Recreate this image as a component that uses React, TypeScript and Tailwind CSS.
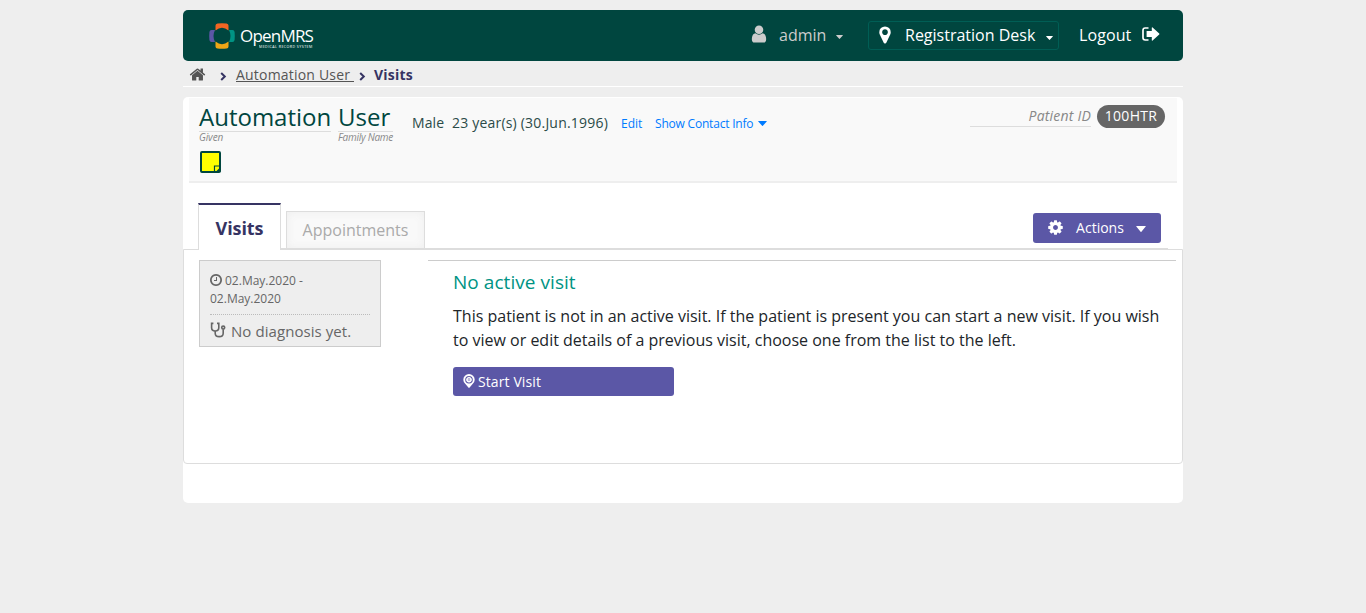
import React from "react";

type IconProps = { className?: string };

const HOME =
  "M1472 992v480q0 26-19 45t-45 19h-384v-384h-256v384h-384q-26 0-45-19t-19-45v-480q0-1 .5-3t.5-3l575-474 575 474q1 2 1 6zm223-69l-62 74q-8 9-21 11h-3q-13 0-21-7l-692-577-692 577q-12 8-24 7-13-2-21-11l-62-74q-8-10-7-23.5t11-21.5l719-599q32-26 76-26t76 26l244 204v-195q0-14 9-23t23-9h192q14 0 23 9t9 23v408l219 182q10 8 11 21.5t-7 23.5z";
const USER =
  "M1536 1399q0 109-62.5 187t-150.5 78h-854q-88 0-150.5-78t-62.5-187q0-85 8.5-160.5t31.5-152 58.5-131 94-89 134.5-34.5q131 128 313 128t313-128q76 0 134.5 34.5t94 89 58.5 131 31.5 152 8.5 160.5zm-256-887q0 159-112.5 271.5t-271.5 112.5-271.5-112.5-112.5-271.5 112.5-271.5 271.5-112.5 271.5 112.5 112.5 271.5z";
const MARKER =
  "M1152 640q0-106-75-181t-181-75-181 75-75 181 75 181 181 75 181-75 75-181zm256 0q0 109-33 179l-364 774q-16 33-47.5 52t-67.5 19-67.5-19-46.5-52l-365-774q-33-70-33-179 0-212 150-362t362-150 362 150 150 362z";
const COG =
  "M1152 896q0-106-75-181t-181-75-181 75-75 181 75 181 181 75 181-75 75-181zm512-109v222q0 12-8 23t-20 13l-185 28q-19 54-39 91 35 50 107 138 10 12 10 25t-9 23q-27 37-99 108t-94 71q-12 0-26-9l-138-108q-44 23-91 38-16 136-29 186-7 28-36 28h-222q-14 0-24.5-8.5t-11.5-21.5l-28-184q-49-16-90-37l-141 107q-10 9-25 9-14 0-25-11-126-114-165-168-7-10-7-23 0-12 8-23 15-21 51-66.5t54-70.5q-27-50-41-99l-183-27q-13-2-21-12.5t-8-23.5v-222q0-12 8-23t19-13l186-28q14-46 39-92-40-57-107-138-10-12-10-24 0-10 9-23 26-36 98.5-107.5t94.5-71.5q13 0 26 10l138 107q44-23 91-38 16-136 29-186 7-28 36-28h222q14 0 24.5 8.5t11.5 21.5l28 184q49 16 90 37l142-107q9-9 24-9 13 0 25 10 129 119 165 170 7 8 7 22 0 12-8 23-15 21-51 66.5t-54 70.5q26 50 41 98l183 28q13 2 21 12.5t8 23.5z";
const CLOCK =
  "M1024 544v448q0 14-9 23t-23 9h-320q-14 0-23-9t-9-23v-64q0-14 9-23t23-9h224v-352q0-14 9-23t23-9h64q14 0 23 9t9 23zm416 352q0-148-73-273t-198-198-273-73-273 73-198 198-73 273 73 273 198 198 273 73 273-73 198-198 73-273zm224 0q0 209-103 385.5t-279.5 279.5-385.5 103-385.5-103-279.5-279.5-103-385.5 103-385.5 279.5-279.5 385.5-103 385.5 103 279.5 279.5 103 385.5z";

function Glyph({ d, className = "" }: { d: string; className?: string }) {
  return (
    <svg viewBox="0 0 1792 1792" fill="currentColor" className={`shrink-0 ${className}`}>
      <path d={d} />
    </svg>
  );
}

function Chevron({ className = "" }: IconProps) {
  return (
    <svg viewBox="0 0 7 9" className={`h-[9px] w-[7px] shrink-0 ${className}`} fill="none" stroke="currentColor" strokeWidth="2">
      <path d="M1.2 1l3.6 3.5L1.2 8" />
    </svg>
  );
}

function Caret({ className = "" }: IconProps) {
  return (
    <svg viewBox="0 0 10 5" className={`shrink-0 ${className}`} fill="currentColor" preserveAspectRatio="none">
      <path d="M.6 0h8.8q.6 0 .3.5L5.4 4.7q-.4.4-.8 0L.3.5Q0 0 .6 0z" />
    </svg>
  );
}

function SignOut({ className = "" }: IconProps) {
  return (
    <svg viewBox="0 0 18 14" className={`h-[14px] w-[18px] shrink-0 ${className}`}>
      <path d="M6.5 1H3.2Q1 1 1 3.2v7.6Q1 13 3.2 13h3.3" fill="none" stroke="currentColor" strokeWidth="1.7" />
      <path d="M4.6 4.1h5.2V.9q0-.9.8-.3l6.6 5.8q.5.6 0 1.2l-6.6 5.8q-.8.6-.8-.3V9.900H4.6z" fill="currentColor" />
    </svg>
  );
}

function Stethoscope({ className = "" }: IconProps) {
  return (
    <svg viewBox="0 0 16 16" className={`h-4 w-4 shrink-0 ${className}`} fill="none" stroke="currentColor" strokeWidth="1.6">
      <path d="M3.4 1.4H1.6v4.4q0 3.2 3.6 3.2t3.6-3.2V1.4H7" />
      <path d="M5.2 9v2.2q0 3.400 4 3.400t4-3.400V7.400" />
      <circle cx="13.2" cy="5.6" r="1.500" />
    </svg>
  );
}

function VisitPin({ className = "" }: IconProps) {
  return (
    <svg viewBox="0 0 12 14" className={`h-[14px] w-3 shrink-0 ${className}`}>
      <path
        fill="currentColor"
        fillRule="evenodd"
        d="M6 0a5.7 5.7 0 0 1 5.7 5.7q0 2.2-1.9 4L6.6 13.6q-.6.6-1.2 0L2.2 9.7Q.3 7.9.3 5.7A5.7 5.7 0 0 1 6 0zM6 1.9A3.8 3.8 0 1 0 6 9.5A3.8 3.8 0 1 0 6 1.9z"
      />
      <circle cx="6" cy="5.7" r="2" fill="none" stroke="currentColor" strokeWidth="1.3" />
      <path fill="currentColor" d="M5.5 2.7h1v2h2.4v2H6.5v2h-1v-2H3.1v-2h2.4z" opacity=".6" />
    </svg>
  );
}

function StickyNote() {
  return (
    <svg viewBox="0 0 21 22" className="h-[22px] w-[21px] shrink-0">
      <rect x="1" y="1" width="19" height="20" rx="1" fill="#ffff00" stroke="#00463f" strokeWidth="2" />
      <path d="M14.5 21v-6H20" fill="none" stroke="#00463f" strokeWidth="1.2" />
      <path d="M15.5 21l5-5v5z" fill="#00463f" />
      <path d="M15.5 19.5V16H19z" fill="#ffff00" />
    </svg>
  );
}

function Logo() {
  return (
    <div className="flex pt-[13px] pl-[26px] text-white">
      <svg viewBox="0 0 26 26" className="h-[26px] w-[26px] shrink-0">
        <path d="M6.5 7.4V2.5Q6.5.7 8.5.4 13 0 17.5.4q2 .3 2 2.1v4.9Q13 2.2 6.5 7.4z" fill="#f26522" />
        <path d="M6.5 18.6v4.9q0 1.8 2 2.1 4.5.4 9 0 2-.3 2-2.1v-4.9Q13 23.8 6.5 18.6z" fill="#eea616" />
        <path d="M6 7H2.5Q.7 7 .4 9 0 13 .4 17q.3 2 2.1 2H6Q3 13 6 7z" fill="#5b57a6" />
        <path d="M20 7h3.5q1.8 0 2.1 2 .4 4 0 8-.3 2-2.1 2H20Q23 13 20 7z" fill="#009384" />
      </svg>
      <div className="ml-[5px] flex flex-col pt-[3px]">
        <span className="text-[17px] leading-[20px] tracking-[-0.8px]">OpenMRS</span>
        <span className="-mt-px ml-[19px] h-0 w-0 origin-top-left scale-[0.4] text-[9px] leading-[9px] tracking-[1.1px] whitespace-nowrap">
          MEDICAL RECORD SYSTEM
        </span>
      </div>
    </div>
  );
}

export default function App() {
  return (
    <div className="flex min-h-[613px] justify-center bg-[#eeeeee] pt-[10px] font-['Open_Sans',sans-serif] whitespace-nowrap">
      <div className="flex w-[1000px] flex-col">
        <header className="flex h-[51px] items-start rounded-[5px] bg-[#00463f]">
          <Logo />
          <nav className="ml-auto flex items-start text-[16px] leading-6 text-white">
            <div className="flex pt-[13px] text-[#cccccc]">
              <Glyph d={USER} className="mt-px mr-[10px] h-[20px] w-[20px]" />
              <span className="w-[48px]">admin</span>
              <Caret className="mt-[12px] ml-[9px] h-[4px] w-[7px]" />
            </div>
            <div className="mt-[11px] ml-[25px] flex h-[29px] w-[191px] rounded-[3px] border border-[#005e55] pt-[1px] pl-[6px]">
              <Glyph d={MARKER} className="mt-[2px] h-[20px] w-[20px]" />
              <span className="ml-[10px] w-[132px]">Registration Desk</span>
              <Caret className="mt-[13px] ml-[9px] h-[4px] w-[7px]" />
            </div>
            <div className="mr-[23px] ml-[20px] flex pt-[13px]">
              <span className="w-[52px] tracking-[0.1px]">Logout</span>
              <SignOut className="mt-[4px] ml-[11px]" />
            </div>
          </nav>
        </header>

        <div className="flex h-[26px] border-b border-white pl-[6px] text-[14px] leading-[26px] tracking-[0.3px] text-[#555555]">
          <Glyph d={HOME} className="mt-[5px] h-[17px] w-[17px]" />
          <Chevron className="mt-[11px] ml-[14px] text-[#363463]" />
          <a className="mt-[5px] ml-[9px] h-[16px] w-[118px] border-b border-[#555555] leading-[18px] tracking-[0.2px]">Automation User</a>
          <Chevron className="mt-[11px] ml-[5px] text-[#363463]" />
          <span className="ml-[8px] pt-[1px] font-bold tracking-[0.2px] text-[#363463]">Visits</span>
        </div>

        <main className="mt-[10px] flex h-[406px] flex-col rounded-[5px] bg-white">
          <section className="mx-[6px] mt-px flex h-[85px] flex-col border-b-2 border-[#eeeeee] bg-[#f9f9f9] pl-[10px] text-[#00463f]">
            <div className="flex h-[53px]">
              <div className="flex w-[132px] flex-col">
                <span className="h-[34px] border-b border-[#dddddd] text-[24px] leading-[38px]">Automation</span>
                <em className="text-[10px] leading-[10px] tracking-[-0.1px] text-[#888888]">Given</em>
              </div>
              <div className="ml-[7px] flex w-[55px] flex-col">
                <span className="h-[34px] border-b border-[#dddddd] text-[24px] leading-[38px]">User</span>
                <em className="text-[10px] leading-[10px] tracking-[-0.25px] text-[#888888]">Family Name</em>
              </div>
              <div className="ml-[19px] flex pt-[15px] text-[14px] leading-5 text-[#2b4b48]">
                <span className="w-[40px] tracking-[0.1px]">Male</span>
                <span className="w-[169px] tracking-[0.2px]">23 year(s) (30.Jun.1996)</span>
                <a className="w-[34px] text-[12px] leading-[21px] text-[#007bff]">Edit</a>
                <a className="w-[99px] text-[12px] leading-[21px] tracking-[-0.2px] text-[#007bff]">Show Contact Info</a>
                <Caret className="mt-[8px] ml-[4px] h-[5px] w-[9px] text-[#007bff]" />
              </div>
              <div className="mr-[12px] ml-auto flex pt-[7px]">
                <em className="h-[22px] w-[121px] border-b border-[#dddddd] text-right text-[14px] leading-[22px] tracking-[0.2px] text-[#888888]">Patient ID</em>
                <span className="ml-[6px] h-[23px] w-[68px] rounded-full bg-[#666666] text-center text-[14px] leading-[22px] tracking-[0.3px] text-white">
                  100HTR
                </span>
              </div>
            </div>
            <div className="flex pl-px">
              <StickyNote />
            </div>
          </section>

          <div className="z-10 mt-[20px] mr-[15px] ml-[15px] flex h-[47px] items-start">
            <div className="h-[47px] w-[83px] border-x border-t-2 border-x-[#dddddd] border-t-[#363463] bg-white text-center text-[18px] leading-[46px] font-bold tracking-[-0.1px] text-[#363463]">
              Visits
            </div>
            <div className="flex h-[47px] flex-1 border-b-2 border-[#dddddd]">
              <div className="mt-[8px] ml-[5px] h-[37px] w-[139px] border border-b-0 border-[#dddddd] bg-[#f9f9f9] text-center text-[16px] leading-[37px] text-[#aaaaaa] shadow-[inset_0_0_10px_#eeeeee]">
                Appointments
              </div>
              <button className="mt-[10px] mr-[7px] ml-auto flex h-[30px] w-[128px] rounded-[3px] bg-[#5b57a6] pl-[14px] text-[14px] leading-[30px] text-white">
                <Glyph d={COG} className="mt-[6px] h-[17px] w-[17px]" />
                <span className="ml-[12px] w-[48px]">Actions</span>
                <Caret className="mt-[13px] ml-[12px] h-[6px] w-[10px]" />
              </button>
            </div>
          </div>

          <section className="-mt-px flex h-[215px] rounded-b-[4px] border border-[#dddddd] pt-[10px] pl-[15px]">
            <div className="flex h-[87px] w-[182px] flex-col border border-[#cccccc] bg-[#eeeeee] px-[10px] pt-[11px] text-[#666666]">
              <div className="flex h-[18px] text-[12px] leading-[18px]">
                <Glyph d={CLOCK} className="-ml-px mt-[1px] mr-[2px] h-[14px] w-[14px]" />
                02.May.2020 -
              </div>
              <div className="h-[25px] shrink-0 border-b border-dotted border-[#bbbbbb] text-[12px] leading-[18px]">02.May.2020</div>
              <div className="flex h-[31px] shrink-0 text-[15px] leading-[33px] tracking-[0.07px]">
                <Stethoscope className="mt-[7px] mr-[5px]" />
                No diagnosis yet.
              </div>
            </div>
            <div className="ml-[47px] flex w-[748px] flex-col items-start self-start border-t border-[#cccccc] pl-[25px]">
              <h4 className="mt-[7px] text-[19px] leading-[29px] tracking-[0.05px] text-[#009384]">No active visit</h4>
              <p className="mt-[7px] text-[16px] leading-6 text-[#212529]">
                This patient is not in an active visit. If the patient is present you can start a new visit. If you wish
                <br />
                to view or edit details of a previous visit, choose one from the list to the left.
              </p>
              <button className="mt-[15px] flex h-[29px] w-[221px] rounded-[3px] bg-[#5b57a6] pl-[10px] text-[14px] leading-[29px] tracking-[0.1px] text-white">
                <VisitPin className="mt-[7px] mr-[3px]" />
                Start Visit
              </button>
            </div>
          </section>
        </main>
      </div>
    </div>
  );
}
